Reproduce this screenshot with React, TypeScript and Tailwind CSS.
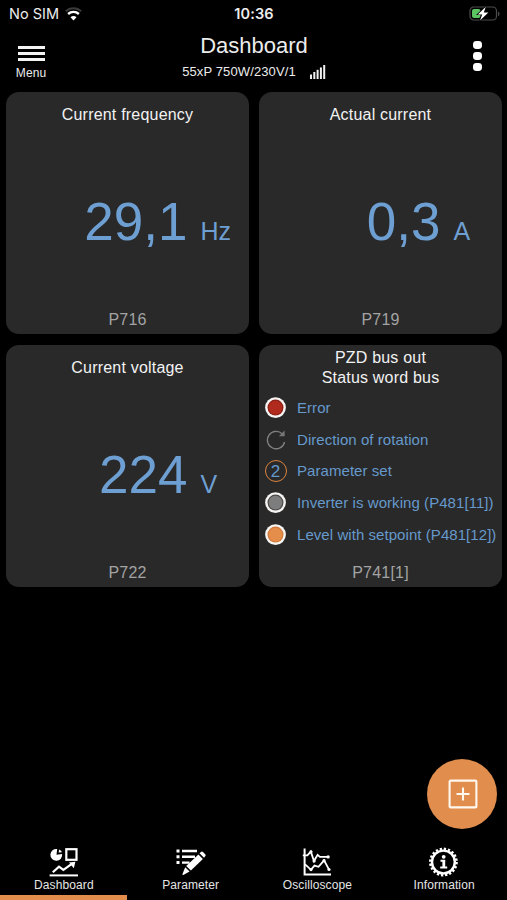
import type { ReactNode } from 'react'
import clsx from 'clsx'

interface ValueCardProps {
  title: string
  value: string
  unit: string
  param: string
}

const values: ValueCardProps[] = [
  { title: 'Current frequency', value: '29,1', unit: 'Hz', param: 'P716' },
  { title: 'Actual current', value: '0,3', unit: 'A', param: 'P719' },
  { title: 'Current voltage', value: '224', unit: 'V', param: 'P722' },
]

function ValueCard({ title, value, unit, param }: ValueCardProps) {
  return (
    <section className="flex h-[242.5px] flex-col rounded-[13px] bg-[#292929] pt-[13px] pb-[4.5px]">
      <h2 className="text-center text-[16px] leading-5 tracking-[0.2px] text-[#f2f2f2]">{title}</h2>
      <div className="flex flex-1 items-baseline pt-[67.2px] text-[#6e9fd2]">
        <span className="w-[181.5px] text-right text-[53px] leading-[60px]">{value}</span>
        <span className="pl-[13px] text-[25px] leading-[60px]">{unit}</span>
      </div>
      <p className="text-center text-[16px] leading-5 tracking-[0.2px] text-[#a3a3a3]">{param}</p>
    </section>
  )
}

function Lamp({ color, ring }: { color: string; ring: string }) {
  return (
    <svg width="22" height="22" viewBox="0 0 22 22">
      <circle cx="10.5" cy="10.6" r="10.4" fill="#f7f5f3" />
      <circle cx="10.5" cy="10.6" r="8" fill={ring} />
      <circle cx="10.5" cy="10.6" r="6.8" fill={color} />
    </svg>
  )
}

function RotationIcon() {
  return (
    <svg width="22" height="22" viewBox="0 0 22 22" fill="none" stroke="#808080" strokeWidth="1.3">
      <path d="M17.4 5A8.7 8.7 0 1 0 19.6 13" />
      <path d="M19.6 1.4V7.2H13.8z" fill="#777" stroke="none" />
    </svg>
  )
}

function StatusRow({ icon, label }: { icon: ReactNode; label: string }) {
  return (
    <li className="flex h-[31.6px] items-center">
      <span className="flex w-[22px] justify-center">{icon}</span>
      <span className="pl-[10.5px] text-[15px] leading-5 tracking-[0.06px] whitespace-nowrap">{label}</span>
    </li>
  )
}

function StatusCard() {
  return (
    <section className="flex h-[242.5px] flex-col rounded-[13px] bg-[#292929] pt-[3px] pb-[4.5px]">
      <h2 className="text-center text-[16px] leading-5 tracking-[0.2px] text-[#f2f2f2]">
        PZD bus out
        <br />
        Status word bus
      </h2>
      <ul className="flex-1 pt-[4.9px] pl-[5.5px] text-[#6699cc]">
        <StatusRow icon={<Lamp color="#b02a1e" ring="#8e2119" />} label="Error" />
        <StatusRow icon={<RotationIcon />} label="Direction of rotation" />
        <StatusRow
          icon={
            <span className="flex size-[22px] shrink-0 items-center justify-center rounded-full border-[1.5px] border-[#d9843f] text-[17px] leading-none">
              2
            </span>
          }
          label="Parameter set"
        />
        <StatusRow icon={<Lamp color="#7d7d7d" ring="#4c4c4c" />} label="Inverter is working (P481[11])" />
        <StatusRow icon={<Lamp color="#e58d4b" ring="#cf7a3a" />} label="Level with setpoint (P481[12])" />
      </ul>
      <p className="text-center text-[16px] leading-5 tracking-[0.2px] text-[#a3a3a3]">P741[1]</p>
    </section>
  )
}

function StatusBar() {
  return (
    <div className="grid h-7 grid-cols-3 items-center pr-[6.5px] pl-[7.5px] font-[Inter,sans-serif] text-[14px] text-[#ededed]">
      <div className="flex items-center gap-[6px] pl-[1.5px]">
        <span className="text-[14.5px]">No SIM</span>
        <svg width="17" height="14" viewBox="0 0 17 14" fill="none">
          <path d="M.8 4.3C5 .2 12 .2 16.2 4.3" stroke="#3a3a3a" strokeWidth="2" />
          <path d="M3.1 7c3.1-2.8 7.7-2.8 10.8 0" stroke="#fff" strokeWidth="2.4" />
          <path d="M8.5 13.4 5.5 10.2c1.6-1.5 4.4-1.5 6 0z" fill="#fff" />
        </svg>
      </div>
      <span className="text-center text-[14.5px] font-semibold tracking-[0.1px]">10:36</span>
      <svg className="justify-self-end" width="31" height="16" viewBox="0 0 31 16">
        <rect x="1" y="1" width="26.5" height="13" rx="3.8" fill="none" stroke="#4d4d4d" strokeWidth="1.2" />
        <path d="M29 5.6c2 .8 2 3.8 0 4.6z" fill="#4d4d4d" />
        <rect x="3" y="3" width="8.5" height="9" rx="2" fill="#5bc561" />
        <path
          d="M16.8.8 8.8 8.4h4.4L11 14.6l8.4-8h-4.6z"
          fill="#fff"
          stroke="#000"
          strokeWidth="1.4"
          paintOrder="stroke"
        />
      </svg>
    </div>
  )
}

function Header() {
  return (
    <header className="grid h-[63.5px] grid-cols-[62px_1fr_62px]">
      <button className="flex flex-col items-center pt-[18px] text-[12px] text-[#ececec]">
        <span className="flex flex-col gap-[3.2px]">
          <span className="h-[3px] w-[27px] bg-[#f4f4f4]" />
          <span className="h-[3px] w-[27px] bg-[#f4f4f4]" />
          <span className="h-[3px] w-[27px] bg-[#f4f4f4]" />
        </span>
        <span className="pt-[5px] leading-[14px] tracking-[0.1px]">Menu</span>
      </button>
      <div className="flex flex-col items-center pt-[5px] pl-px text-[#ececec]">
        <h1 className="text-[22px] leading-[26px]">Dashboard</h1>
        <div className="flex items-end gap-[13px] pt-[5px]">
          <span className="text-[13px] leading-4 tracking-[0.12px]">55xP 750W/230V/1</span>
          <svg className="mb-[1px]" width="17" height="15" viewBox="0 0 17 15" fill="#f0f0f0">
            <rect x="1" y="10.5" width="2" height="4.5" />
            <rect x="4.3" y="8" width="2" height="7" />
            <rect x="7.6" y="5.8" width="2" height="9.2" />
            <rect x="10.9" y="3.4" width="2" height="11.6" />
            <rect x="14.2" y="1" width="2" height="14" />
          </svg>
        </div>
      </div>
      <button className="flex flex-col items-center gap-[2.5px] pt-[13px] pl-[3px]">
        <span className="size-[8.4px] rounded-[3.4px] bg-white" />
        <span className="size-[8.4px] rounded-[3.4px] bg-white" />
        <span className="size-[8.4px] rounded-[3.4px] bg-white" />
      </button>
    </header>
  )
}

function DashboardIcon() {
  return (
    <svg width="30" height="30" viewBox="0 0 30 30" fill="none" stroke="#fff">
      <path d="M7.5 7.8 8.2 2.1A5.9 5.9 0 1 0 13.1 7z" fill="#fff" stroke="none" />
      <path d="M9.6 5.6 10.2 2.4Q12.4 3.3 13 5.2z" fill="#fff" stroke="none" />
      <rect x="17.3" y="2.2" width="10.2" height="10.6" strokeWidth="2.2" />
      <path d="M3.8 25.3 10 19.6l4.4 3.2 8.4-6" strokeWidth="2.2" />
      <path d="M20 15.4l6.4-.6-1.6 6.4z" fill="#fff" stroke="none" />
      <path d="M.6 28.4H29" strokeWidth="2" />
    </svg>
  )
}

function ParameterIcon() {
  return (
    <svg width="30" height="30" viewBox="0 0 30 30" fill="none" stroke="#fff">
      <path d="M.5 4h3M.5 9.8h3M.5 15.6h3" strokeWidth="3" />
      <path d="M6 4h15M6 9.8h13M6 15.6h7.5" strokeWidth="2.4" />
      <path d="M22.4 7.5l4.5 4.4L14.9 23.6l-4.7-4.5z" fill="#fff" stroke="none" />
      <path d="M23.5 6.3l1.5-1.3q1-.8 2 .1l2.2 2.2q.9 1 0 2L28 10.8z" fill="#fff" stroke="none" />
      <path d="M9.2 20.3l4.4 4.2-6.3 3.4q-1 .2-.8-.9z" fill="#fff" stroke="none" />
    </svg>
  )
}

function OscilloscopeIcon() {
  return (
    <svg width="30" height="30" viewBox="0 0 30 30" fill="none" stroke="#fff">
      <path d="M2.6 1.5V27.6H29" strokeWidth="2" />
      <path d="M.8 8.3h4.6L8.8 4.6 12 14l3.6-6.1 2.3 2H26" strokeWidth="1.8" />
      <path d="M3 17.3l2.6 2.4 3.3 3.1 3.6-4.2 4 1.2 5.6-6.5 4.8 9" strokeWidth="1.8" />
      <g fill="#fff" stroke="none">
        <circle cx="9" cy="4.8" r="1.6" />
        <circle cx="12.1" cy="14" r="1.6" />
        <circle cx="26.1" cy="9.9" r="1.7" />
        <circle cx="9" cy="22.6" r="1.6" />
        <circle cx="22" cy="13.7" r="1.6" />
        <circle cx="27" cy="22.5" r="1.6" />
      </g>
    </svg>
  )
}

function InformationIcon() {
  return (
    <svg width="30" height="30" viewBox="0 0 30 30" fill="none" stroke="#fff">
      <circle cx="14.4" cy="15" r="11.4" strokeWidth="2.4" />
      <circle cx="14.4" cy="15" r="13.2" strokeWidth="2.4" strokeDasharray="2.3 1.848" />
      <circle cx="14.7" cy="9.8" r="1.9" fill="#fff" stroke="none" />
      <path d="M11.5 13.7h4.6M11.2 20.6h7" strokeWidth="2" />
      <path d="M14.8 13v7.6" strokeWidth="2.8" />
    </svg>
  )
}

const tabs = [
  { label: 'Dashboard', icon: <DashboardIcon />, active: true },
  { label: 'Parameter', icon: <ParameterIcon />, active: false },
  { label: 'Oscilloscope', icon: <OscilloscopeIcon />, active: false },
  { label: 'Information', icon: <InformationIcon />, active: false },
]

function TabBar() {
  return (
    <nav className="grid h-[54px] grid-cols-4">
      {tabs.map((tab) => (
        <button
          key={tab.label}
          className={clsx(
            'flex flex-col items-center border-b-5 pt-px pl-px text-[12px] text-[#e6e6e6]',
            tab.active ? 'border-[#e38d4c]' : 'border-transparent',
          )}
        >
          {tab.icon}
          <span className="pt-px leading-[14px] tracking-[0.1px]">{tab.label}</span>
        </button>
      ))}
    </nav>
  )
}

export default function App() {
  return (
    <div className="relative flex h-[900px] w-[507px] flex-col overflow-hidden bg-black font-['Liberation_Sans',Arial,sans-serif]">
      <StatusBar />
      <Header />
      <main className="grid flex-1 grid-cols-[243px_243px] content-start gap-x-[10px] gap-y-[10.5px] pl-[6px]">
        {values.map((v) => (
          <ValueCard key={v.param} {...v} />
        ))}
        <StatusCard />
      </main>
      <button className="absolute right-[10px] bottom-[71px] flex size-[70px] items-center justify-center rounded-full bg-[#e08d4d]">
        <svg className="ml-[2px]" width="30" height="30" viewBox="0 0 30 30" fill="none" stroke="#fff8ef" strokeWidth="2.1">
          <rect x="1.6" y="1.6" width="26.8" height="26.8" rx="1" />
          <path d="M15 8.5v13M8.5 15h13" />
        </svg>
      </button>
      <TabBar />
    </div>
  )
}
